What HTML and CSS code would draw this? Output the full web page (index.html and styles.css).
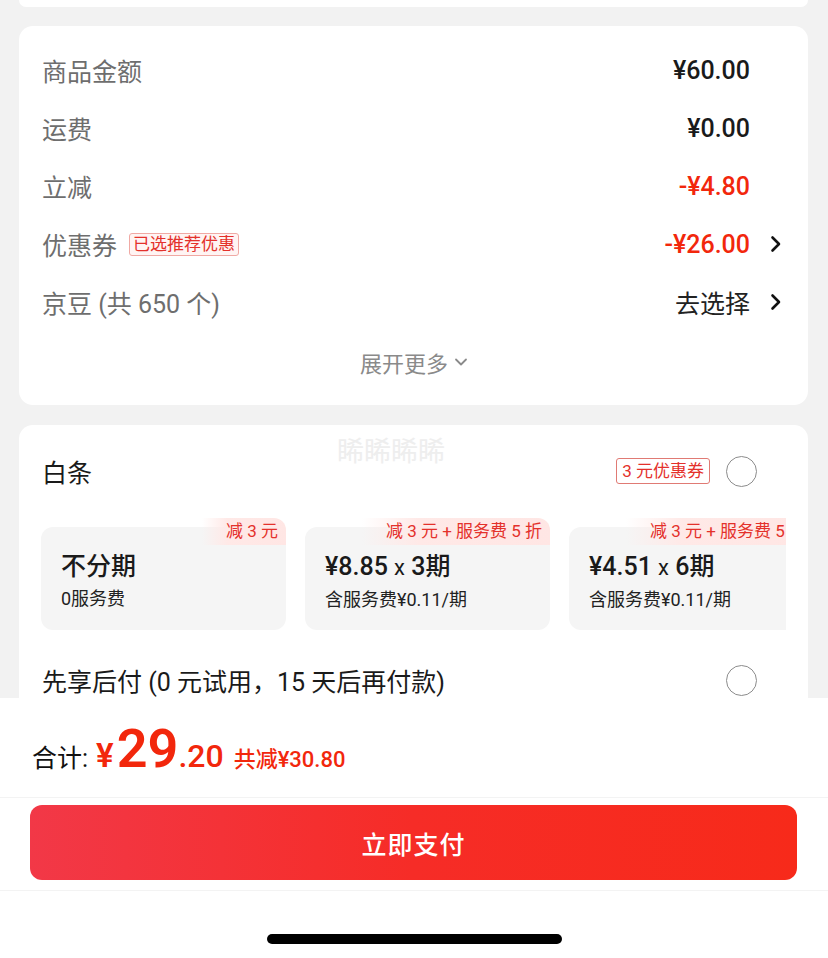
FILE: index.html
```
<!DOCTYPE html>
<html lang="zh-CN">
<head>
    <meta charset="UTF-8">
    <meta name="viewport" content="width=device-width, initial-scale=1.0">
    <title>确认订单</title>
    <link rel="stylesheet" href="styles.css">
</head>
<body>

    <div class="page">
        <div class="scroll">
            <div class="card card-prev"></div>

            <section class="card price-card">
                <div class="price-row">
                    <span class="label">商品金额</span>
                    <span class="value">¥60.00</span>
                    <span class="arrow"></span>
                </div>
                <div class="price-row">
                    <span class="label">运费</span>
                    <span class="value">¥0.00</span>
                    <span class="arrow"></span>
                </div>
                <div class="price-row">
                    <span class="label">立减</span>
                    <span class="value red">-¥4.80</span>
                    <span class="arrow"></span>
                </div>
                <div class="price-row">
                    <span class="label">优惠券 <em class="tag">已选推荐优惠</em></span>
                    <span class="value red">-¥26.00</span>
                    <span class="arrow">
                        <svg width="12" height="18" viewBox="0 0 12 18"><path d="M2.5 2.5 L9 9 L2.5 15.5" fill="none" stroke="#111" stroke-width="2.6" stroke-linecap="round" stroke-linejoin="round"/></svg>
                    </span>
                </div>
                <div class="price-row">
                    <span class="label">京豆 (共 650 个)</span>
                    <span class="value plain">去选择</span>
                    <span class="arrow">
                        <svg width="12" height="18" viewBox="0 0 12 18"><path d="M2.5 2.5 L9 9 L2.5 15.5" fill="none" stroke="#111" stroke-width="2.6" stroke-linecap="round" stroke-linejoin="round"/></svg>
                    </span>
                </div>
                <div class="expand">
                    展开更多
                    <svg width="14" height="10" viewBox="0 0 14 10"><path d="M2 2.5 L7 7.5 L12 2.5" fill="none" stroke="#8a8a8a" stroke-width="1.8" stroke-linecap="round" stroke-linejoin="round"/></svg>
                </div>
            </section>

            <section class="card pay-card">
                <div class="watermark">睎睎睎睎</div>
                <div class="pay-row">
                    <span class="pay-name">白条</span>
                    <span class="coupon">3 元优惠券</span>
                    <span class="radio"></span>
                </div>
                <div class="plans">
                    <div class="plan">
                        <span class="plan-tag">减 3 元</span>
                        <div class="plan-title">不分期</div>
                        <div class="plan-sub">0服务费</div>
                    </div>
                    <div class="plan">
                        <span class="plan-tag">减 3 元 + 服务费 5 折</span>
                        <div class="plan-title">¥8.85 <small>x</small> 3期</div>
                        <div class="plan-sub">含服务费¥0.11/期</div>
                    </div>
                    <div class="plan">
                        <span class="plan-tag">减 3 元 + 服务费 5 折</span>
                        <div class="plan-title">¥4.51 <small>x</small> 6期</div>
                        <div class="plan-sub">含服务费¥0.11/期</div>
                    </div>
                </div>
                <div class="pay-row later">
                    <span class="pay-name">先享后付 (0 元试用，15 天后再付款)</span>
                    <span class="radio"></span>
                </div>
            </section>
        </div>

        <footer class="footer">
            <div class="total">
                <span class="total-label">合计:</span>
                <span class="yen">¥</span><span class="big">29</span><span class="cents">.20</span>
                <span class="saved">共减¥30.80</span>
            </div>
            <div class="btn-wrap">
                <button class="pay-btn">立即支付</button>
            </div>
            <div class="home-bar"><span></span></div>
        </footer>
    </div>

</body>
</html>
```

FILE: styles.css
```
* { box-sizing: border-box; }
body { margin: 0; background: #f2f2f2; font-family: Roboto, "Noto Sans CJK SC", sans-serif; color: #1a1a1a; }
.page { width: 828px; height: 958px; display: flex; flex-direction: column; overflow: hidden; }
.scroll { height: 698px; overflow: hidden; padding: 0 20px 0 19px; }

.card { background: #fff; border-radius: 14px; }
.card-prev { height: 7px; border-radius: 0 0 12px 12px; }

/* price summary */
.price-card { margin-top: 19px; padding: 15px 26px 12px 23px; }
.price-row { display: flex; align-items: center; height: 58px; }
.label { flex: 1; font-size: 25px; color: #6e6e6e; display: flex; align-items: center; }
.tag { font-style: normal; font-size: 17px; line-height: 21px; color: #e4312b; background: #fff4f3; border: 1px solid #f0a9a4; border-radius: 3px; padding: 0 3px; margin-left: 12px; }
.value { font-size: 25px; font-weight: 500; color: #1a1a1a; }
.value.red { color: #f2270c; }
.value.plain { font-weight: 400; font-size: 25px; color: #222; }
.arrow { width: 32px; display: flex; justify-content: flex-end; }
.expand { height: 62px; display: flex; align-items: center; justify-content: center; gap: 6px; font-size: 22px; color: #8a8a8a; padding-left: 4px; }

/* payment */
.pay-card { margin-top: 20px; padding: 16px 22px 0 23px; position: relative; height: 700px; }
.watermark { position: absolute; left: 318px; top: 5px; font-size: 27px; color: #eeeeee; }
.pay-row { display: flex; align-items: center; height: 60px; }
.pay-name { flex: 1; font-size: 25px; color: #1a1a1a; }
.coupon { font-size: 17px; line-height: 24px; color: #e4312b; border: 1px solid #e07a74; border-radius: 3px; padding: 0 5px; margin-right: 16px; }
.radio { width: 31px; height: 31px; border: 1.5px solid #8c8c8c; border-radius: 50%; margin-right: 29px; }

.plans { display: flex; gap: 19px; overflow: hidden; padding-top: 9px; margin: 17px 0 0 -1px; }
.plan { flex-shrink: 0; width: 245px; height: 103px; background: #f5f5f5; border-radius: 12px; padding: 24px 20px 0; position: relative; }
.plan-tag { position: absolute; top: -9px; right: 0; height: 27px; line-height: 27px; padding: 0 8px 0 24px; font-size: 17px; color: #e4312b; white-space: nowrap; background: linear-gradient(90deg, rgba(255, 232, 230, 0), #ffe9e7 30%, #ffe6e4); border-radius: 0 12px 0 0; }
.plan-title { font-size: 25px; font-weight: 500; line-height: 32px; color: #1a1a1a; }
.plan-title small { font-size: 22px; font-weight: 400; }
.plan-sub { font-size: 18px; line-height: 22px; margin-top: 5px; color: #222; }

.pay-row.later { margin-top: 20px; }

/* footer */
.footer { flex: 1; background: #fff; }
.total { height: 100px; display: flex; align-items: baseline; padding: 26px 0 0 32px; border-bottom: 1px solid #f3f3f3; color: #f2270c; }
.total-label { font-size: 25px; color: #111; margin-right: 8px; }
.yen { font-size: 33px; font-weight: 600; margin-right: 3px; }
.big { font-size: 54px; font-weight: 600; line-height: 50px; }
.cents { font-size: 32px; font-weight: 500; }
.saved { font-size: 22px; font-weight: 500; margin-left: 10px; }

.btn-wrap { padding: 7px 31px 10px 30px; border-bottom: 1px solid #f3f3f3; }
.pay-btn { width: 100%; height: 75px; border: none; border-radius: 12px; background: linear-gradient(90deg, #f23847, #f62c27 50%, #f72a1a); color: #fff; font-family: "Noto Sans CJK SC", sans-serif; font-size: 25px; font-weight: 500; letter-spacing: 1px; }

.home-bar { display: flex; justify-content: center; padding-top: 43px; }
.home-bar span { width: 295px; height: 10px; background: #000; border-radius: 5px; }
```
